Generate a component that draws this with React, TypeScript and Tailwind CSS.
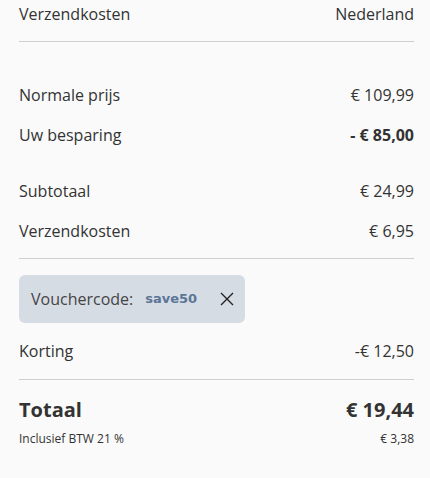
const font = { fontFamily: '"Open Sans", "Liberation Sans", sans-serif' };

function Row({
  label,
  value,
  bold,
}: {
  label: string;
  value: string;
  bold?: boolean;
}) {
  return (
    <div className="flex items-center justify-between py-2 text-base leading-6">
      <span>{label}</span>
      <span className={bold ? "font-bold" : ""}>{value}</span>
    </div>
  );
}

export default function App() {
  return (
    <div
      className="min-h-[478px] bg-[#fafafa] pl-[19px] pr-[16px] text-[#333]"
      style={font}
    >
      <div className="flex items-center justify-between pt-[2px] text-base leading-6">
        <span>Verzendkosten</span>
        <span>Nederland</span>
      </div>
      <div className="mt-[15px] border-t border-[#cfcfcf]" />

      <div className="mt-[33px]">
        <Row label="Normale prijs" value="€ 109,99" />
        <Row label="Uw besparing" value="- € 85,00" bold />
      </div>

      <div className="mt-[16px]">
        <Row label="Subtotaal" value="€ 24,99" />
        <Row label="Verzendkosten" value="€ 6,95" />
      </div>
      <div className="mt-[7px] border-t border-[#cfcfcf]" />

      <div className="mt-[16px] inline-flex h-[48px] w-[226px] items-center rounded-md bg-[#d6dce4] pl-3 text-base text-[#444]">
        <span>Vouchercode:</span>
        <span
          className="ml-3 text-[13px] font-bold text-[#5b7596]"
          style={{ fontFamily: '"DejaVu Sans", sans-serif' }}
        >
          save50
        </span>
        <svg
          className="ml-[23px]"
          width="14"
          height="14"
          viewBox="0 0 14 14"
          fill="none"
          stroke="#222"
          strokeWidth="1.4"
        >
          <path d="M1 1L13 13M13 1L1 13" />
        </svg>
      </div>

      <div className="mt-[8px]">
        <Row label="Korting" value="-€ 12,50" />
      </div>
      <div className="mt-[8px] border-t border-[#cfcfcf]" />

      <div className="mt-[16px] flex items-center justify-between text-xl font-bold leading-7">
        <span>Totaal</span>
        <span>€ 19,44</span>
      </div>
      <div className="mt-[7px] flex items-center justify-between text-xs leading-4">
        <span>Inclusief BTW 21 %</span>
        <span>€ 3,38</span>
      </div>
    </div>
  );
}
